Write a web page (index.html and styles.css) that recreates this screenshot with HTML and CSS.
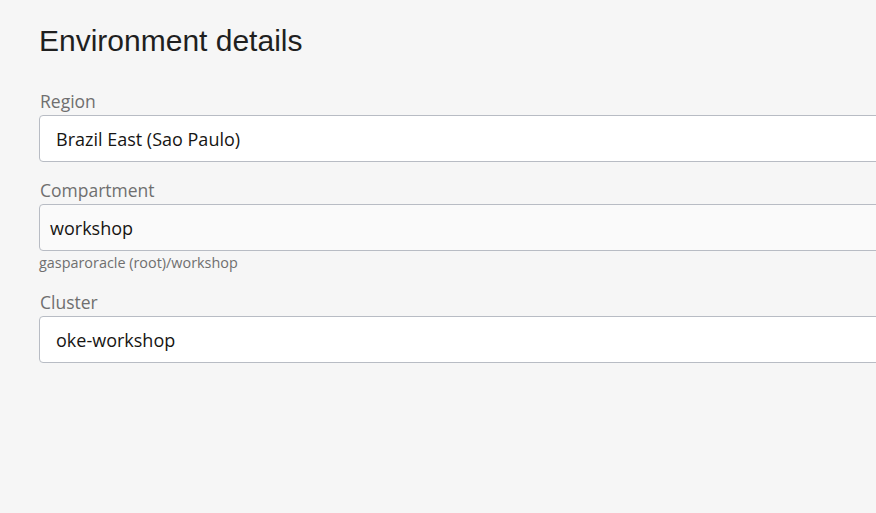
FILE: index.html
```html
<!DOCTYPE html>
<html>
<head>
<meta charset="utf-8">
<link rel="stylesheet" href="styles.css">
</head>
<body>
<main class="page">
  <h1 class="title">Environment details</h1>
  <div class="field">
    <label class="label">Region</label>
    <div class="box">Brazil East (Sao Paulo)</div>
  </div>
  <div class="field">
    <label class="label">Compartment</label>
    <div class="box box-alt">workshop</div>
    <div class="hint">gasparoracle (root)/workshop</div>
  </div>
  <div class="field">
    <label class="label">Cluster</label>
    <div class="box">oke-workshop</div>
  </div>
</main>
</body>
</html>
```

FILE: styles.css
```css
html, body {
  margin: 0;
  padding: 0;
  background: #f6f6f6;
  overflow: hidden;
}
.page {
  padding: 24px 0 0 39px;
  width: 900px;
  font-family: "Open Sans", "Noto Sans", sans-serif;
}
.title {
  margin: 0 0 32px 0;
  font-family: "Liberation Sans", Arial, sans-serif;
  font-weight: 400;
  font-size: 30px;
  line-height: 34px;
  color: #1f1f1f;
}
.field {
  display: flex;
  flex-direction: column;
  margin-bottom: 17px;
}
.label {
  font-size: 17.5px;
  line-height: 22px;
  color: #6f6f6f;
  margin-bottom: 3px;
  padding-left: 1px;
}
.box {
  box-sizing: border-box;
  height: 47px;
  border: 1px solid #b8bcc4;
  border-radius: 4px;
  background: #ffffff;
  display: flex;
  align-items: center;
  padding-left: 16px;
  font-size: 18px;
  color: #161513;
}
.box-alt {
  background: #fafafa;
  padding-left: 10px;
}
.hint {
  font-size: 14.4px;
  line-height: 18px;
  color: #6f6f6f;
  margin-top: 3px;
  margin-bottom: 2px;
}
```
